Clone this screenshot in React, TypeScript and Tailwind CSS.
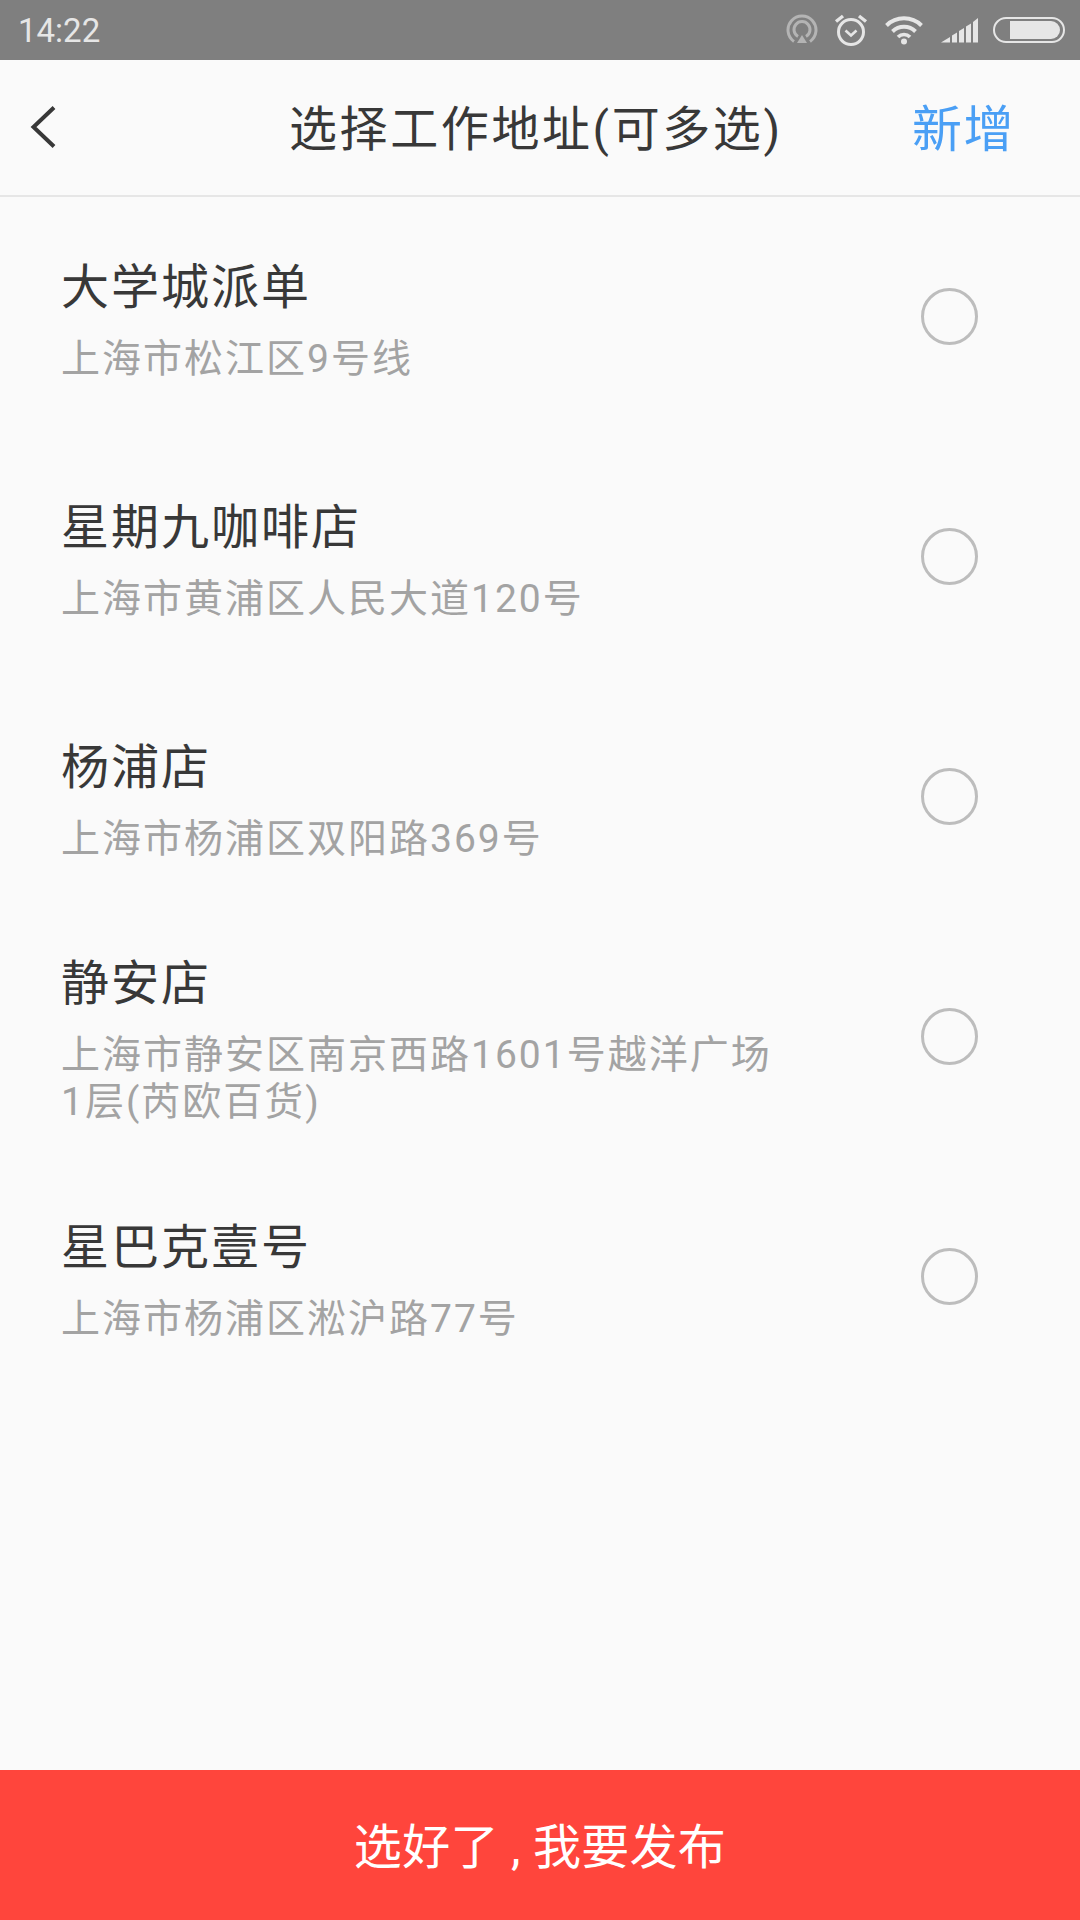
const font = { fontFamily: 'Roboto, "Noto Sans CJK SC", sans-serif' };

const addresses = [
    { name: "大学城派单", detail: "上海市松江区9号线" },
    { name: "星期九咖啡店", detail: "上海市黄浦区人民大道120号" },
    { name: "杨浦店", detail: "上海市杨浦区双阳路369号" },
    { name: "静安店", detail: "上海市静安区南京西路1601号越洋广场1层(芮欧百货)" },
    { name: "星巴克壹号", detail: "上海市杨浦区淞沪路77号" },
];

const StatusIcons = () => (
    <div className="flex items-center">
        {/* hotspot */}
        <svg width="32" height="32" viewBox="0 0 32 32" fill="none" stroke="#b4b4b4" strokeWidth="3">
            <path d="M8 27.500A14 14 0 1 1 24 27.500" />
            <path d="M12 22.500A8 8 0 1 1 20 22.500" />
            <path d="M16 21l5 8H11z" fill="#b4b4b4" stroke="none" />
        </svg>
        {/* alarm */}
        <svg width="34" height="34" viewBox="0 0 34 34" fill="none" stroke="#e6e6e6" strokeWidth="3" className="ml-[16px]">
            <circle cx="17" cy="19" r="12.500" />
            <path d="M11.500 17.500l5.500 5 5.500-5" strokeWidth="2.600" />
            <path d="M2 8.500L9 3M32 8.500L25 3" strokeWidth="3.400" />
        </svg>
        {/* wifi */}
        <svg width="38" height="30" viewBox="0 0 38 30" fill="none" stroke="#e6e6e6" strokeWidth="4" className="ml-[17px]">
            <path d="M1.500 10.500a25 25 0 0 1 35 0" />
            <path d="M7.500 16.500a16.500 16.500 0 0 1 23 0" />
            <path d="M13 22a8.500 8.500 0 0 1 12 0" strokeWidth="3.600" />
            <circle cx="19" cy="26.500" r="3" fill="#e6e6e6" stroke="none" />
        </svg>
        {/* signal */}
        <svg width="38" height="26" viewBox="0 0 38 26" fill="#e6e6e6" className="ml-[18px]">
            <path d="M0 25.500L9 20v5.500z" />
            <path d="M11 18.500l5-3v10h-5z" />
            <path d="M18 14l5-3v14.500h-5z" />
            <path d="M25 9.500l5-3v19h-5z" />
            <path d="M32 5l5-4v24.500h-5z" />
        </svg>
        {/* battery */}
        <div className="ml-[14px] flex h-[26px] w-[72px] items-center justify-end rounded-[13px] border-2 border-[#e6e6e6] pr-[3px]">
            <div className="h-[18px] w-[50px] rounded-r-[9px] bg-[#e6e6e6]" />
        </div>
    </div>
);

const App = () => {
    return (
        <div className="flex h-[1920px] w-[1080px] flex-col bg-[#fafafa]" style={font}>
            <div className="flex h-[60px] shrink-0 items-center justify-between bg-[#7f7f7f] pl-[18px] pr-[15px]">
                <span className="text-[33px] leading-none text-[#e6e6e6]">14:22</span>
                <StatusIcons />
            </div>

            <div className="relative flex h-[137px] shrink-0 items-center justify-between border-b-2 border-[#e6e6e6] pl-[30px] pr-[65px] pt-[5px]">
                <svg width="26" height="42" viewBox="0 0 26 42" fill="none" stroke="#383838" strokeWidth="4" className="mb-[7px]">
                    <path d="M24 1.500L3.500 21 24 40.500" />
                </svg>
                <span className="absolute left-[289px] text-[48px] leading-none tracking-[2.600px] text-[#383838]">
                    选择工作地址(可多选)
                </span>
                <span className="text-[50px] leading-none tracking-[1.500px] text-[#4a9ff5]">新增</span>
            </div>

            <div className="flex-1">
                {addresses.map((item) => (
                    <div key={item.name} className="flex h-[240px] items-center justify-between pb-[2px] pl-[61px] pr-[102px]">
                        <div className="w-[720px] pt-[8px]">
                            <div className="text-[48px] leading-[60px] tracking-[2px] text-[#383838]">{item.name}</div>
                            <div className="mt-[18px] text-[39px] leading-[47px] tracking-[2px] text-[#a3a3a3]">{item.detail}</div>
                        </div>
                        <div className="h-[57px] w-[57px] rounded-full border-[3px] border-[#bdbdbd]" />
                    </div>
                ))}
            </div>

            <div className="flex h-[150px] shrink-0 items-center justify-center whitespace-pre bg-[#ff453c] pt-[5px] text-[48px] leading-none tracking-[0.300px] text-white">
                选好了 , 我要发布
            </div>
        </div>
    );
};

export default App;
